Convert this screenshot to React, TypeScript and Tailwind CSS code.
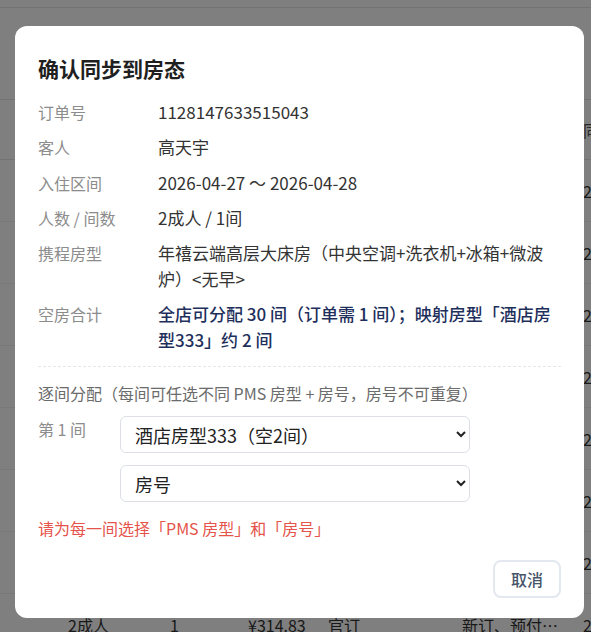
import React from 'react';

const rows = Array.from({ length: 8 });

function Cells({ cells }: { cells: string[] }) {
  const widths = ['w-[102px]', 'w-[78px]', 'w-[80px]', 'w-[134px]', 'w-[121px]', 'w-[120px]'];
  return (
    <>
      {cells.map((c, i) => (
        <div key={i} className={`${widths[i]} shrink-0`}>
          {c}
        </div>
      ))}
    </>
  );
}

function Background() {
  return (
    <div className="w-full h-full bg-white text-[#333] text-[16px]">
      <div className="h-[8px] border-b border-[#e5e7eb]" />
      <div className="h-[92px] border-b border-[#e5e7eb]" />
      <div className="h-[60px] border-b border-[#e5e7eb] flex items-center pl-[68px] whitespace-nowrap text-[#555]">
        <Cells cells={['人数', '间数', '金额', '来源', '标签', '同步时间']} />
      </div>
      {rows.map((_, i) => (
        <div key={i} className="h-[62px] border-b border-[#eef0f3] flex items-center pl-[68px] whitespace-nowrap">
          <Cells cells={['2成人', '1', '¥314.83', '官订', '新订、预付…', '2026-04-27']} />
        </div>
      ))}
    </div>
  );
}

function InfoRow({ label, children }: { label: string; children: React.ReactNode }) {
  return (
    <div className="grid grid-cols-[120px_1fr]">
      <div className="text-[16px] leading-[26px] text-[#8c8c8c]">{label}</div>
      <div className="text-[17px] leading-[26px] text-[#333]">{children}</div>
    </div>
  );
}

export default function App() {
  return (
    <div
      className="relative h-[632px] w-full overflow-hidden"
      style={{ fontFamily: '"Noto Sans CJK SC", "Noto Sans", sans-serif' }}
    >
      <Background />

      {/* 遮罩 + 弹窗 */}
      <div className="absolute inset-0 bg-black/50 flex items-start pt-[26px] pl-[15px]">
        <div className="w-[569px] rounded-[12px] bg-white px-[23px] pt-[24px] pb-[20px]">
          <h2 className="text-[21px] leading-[36px] font-bold text-[#1f1f1f]">确认同步到房态</h2>

          <div className="mt-[13px] flex flex-col gap-[9.25px]">
            <InfoRow label="订单号">1128147633515043</InfoRow>
            <InfoRow label="客人">高天宇</InfoRow>
            <InfoRow label="入住区间">2026-04-27 ～ 2026-04-28</InfoRow>
            <InfoRow label="人数 / 间数">2成人 / 1间</InfoRow>
            <InfoRow label="携程房型">年禧云端高层大床房（中央空调+洗衣机+冰箱+微波炉）&lt;无早&gt;</InfoRow>
            <InfoRow label="空房合计">
              <span className="font-medium text-[#1e2f5c]">
                全店可分配 30 间（订单需 1 间）；映射房型「酒店房型333」约 2 间
              </span>
            </InfoRow>
          </div>

          <div className="mt-[13px] border-t border-dashed border-[#e4e7ec]" />

          <div className="mt-[13px] text-[16px] leading-[26px] text-[#6b6b6b]">
            逐间分配（每间可任选不同 PMS 房型 + 房号，房号不可重复）
          </div>

          <div className="mt-[10px] flex">
            <div className="w-[82px] text-[16px] leading-[26px] text-[#8c8c8c]">第 1 间</div>
            <div className="flex flex-col gap-[12px]">
              <select className="w-[350px] h-[37px] rounded-[6px] border border-[#dcdfe6] bg-white pl-[10px] pr-[18px] text-[18px] text-[#222]">
                <option>酒店房型333（空2间）</option>
              </select>
              <select className="w-[350px] h-[37px] rounded-[6px] border border-[#dcdfe6] bg-white pl-[10px] pr-[18px] text-[18px] text-[#222]">
                <option>房号</option>
              </select>
            </div>
          </div>

          <div className="mt-[13px] text-[16px] leading-[26px] text-[#e5534b]">
            请为每一间选择「PMS 房型」和「房号」
          </div>

          <div className="mt-[19px] flex justify-end">
            <button className="h-[38px] rounded-[8px] border-2 border-[#e3e7ee] bg-white px-[16px] text-[16px] font-medium text-[#475569]">
              取消
            </button>
          </div>
        </div>
      </div>
    </div>
  );
}
